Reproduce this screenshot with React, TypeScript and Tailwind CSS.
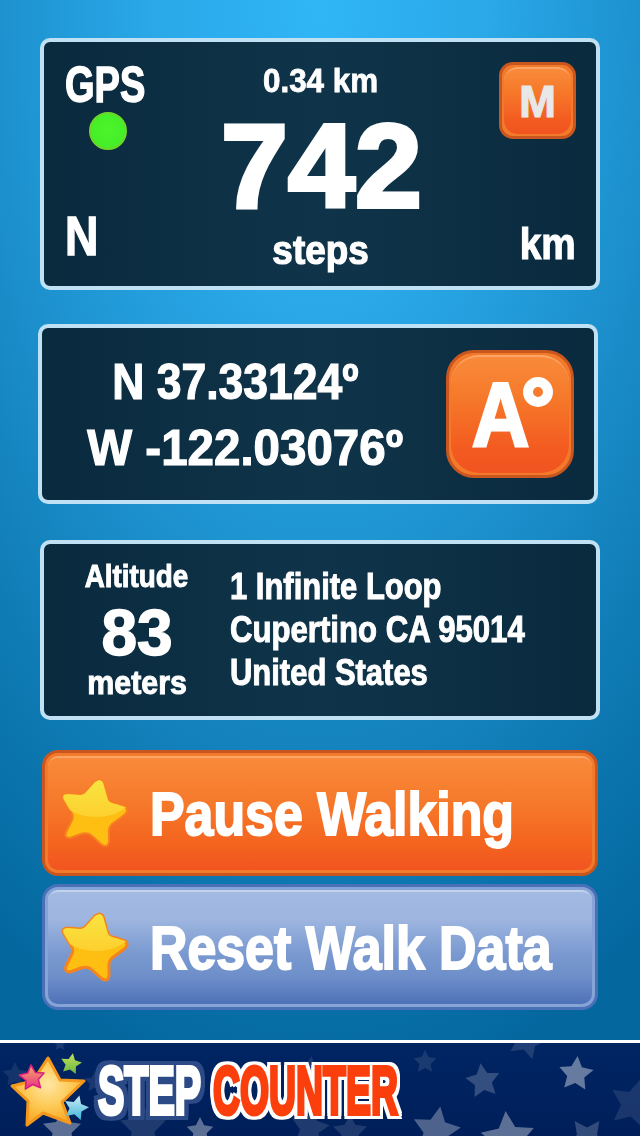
import React from "react";

const FONT = "font-['Liberation_Sans',sans-serif] font-bold text-white leading-none whitespace-nowrap";

function starPoints(cx: number, cy: number, r: number, rot = 0, inner = 0.5) {
  const pts: string[] = [];
  for (let i = 0; i < 10; i++) {
    const a = ((-90 + rot + i * 36) * Math.PI) / 180;
    const rr = i % 2 === 0 ? r : r * inner;
    pts.push(`${(cx + rr * Math.cos(a)).toFixed(1)},${(cy + rr * Math.sin(a)).toFixed(1)}`);
  }
  return pts.join(" ");
}

function ButtonStar({ id, stroke, sw }: { id: string; stroke: string; sw: number }) {
  const d = "M39 4 Q43 4 44 10 L48 24 Q50 27 56 28 L65 31 Q70 35 63 40 L52 48 Q48 52 49 58 L49 66 Q47 73 41 68 L31 59 Q27 56 21 58 L10 62 Q3 62 7 54 L12 44 Q14 39 10 34 L4 24 Q1 18 8 18 L20 19 Q24 19 27 15 L35 6 Z";
  return (
    <svg width="72" height="76" viewBox="0 0 72 76" className="shrink-0">
      <defs>
        <clipPath id={id}><path d={d} /></clipPath>
        <linearGradient id={id + "g"} x1="0" y1="0" x2="0" y2="1">
          <stop offset="0" stopColor="#f5f24e" />
          <stop offset="1" stopColor="#fdd02e" />
        </linearGradient>
      </defs>
      <path d={d} fill="#ffbe12" stroke={stroke} strokeWidth={sw} strokeLinejoin="round" />
      <g clipPath={`url(#${id})`}>
        <ellipse cx="36" cy="10" rx="42" ry="31" fill={`url(#${id}g)`} />
      </g>
    </svg>
  );
}

function OrangeSquare({ children, className }: { children: React.ReactNode; className: string }) {
  return (
    <div className={`border-[3px] border-[#c9561f] bg-[#f37a2a] p-[2px] shrink-0 ${className}`}>
      <div className="w-full h-full rounded-[inherit] bg-[linear-gradient(#f98a3b_0%,#f6792a_35%,#f35a20_80%,#f15420_100%)] border-t-2 border-t-[#fba566] flex items-center justify-center">
        {children}
      </div>
    </div>
  );
}

function Panel({ className, children }: { className: string; children: React.ReactNode }) {
  return (
    <div className={`border-[4px] border-[#bfe1f3] rounded-[10px] bg-[linear-gradient(90deg,#0a2a3e_0%,#0f3449_50%,#0a2a3e_100%)] ${className}`}>
      {children}
    </div>
  );
}

function BigButton({ label, blue, id }: { label: string; blue?: boolean; id: string }) {
  return (
    <div
      className={`h-[126px] rounded-[16px] border-[3px] p-[3px] ${
        blue ? "border-[#4a71b8] bg-[#87a4d6]" : "border-[#c9561f] bg-[#f37a2a]"
      }`}
    >
      <div
        className={`h-full rounded-[10px] border-t-2 flex items-center gap-[18px] pl-[12px] ${
          blue
            ? "border-t-[#c3d3ec] bg-[linear-gradient(#a3bbe2_0%,#9db5df_25%,#7a99d0_55%,#6f8fca_75%,#4f72b8_100%)]"
            : "border-t-[#fba566] bg-[linear-gradient(#f98a3b_0%,#f6792a_40%,#f4651f_75%,#f15420_100%)]"
        }`}
      >
        <ButtonStar id={id} stroke={blue ? "#f5841f" : "#f8811f"} sw={blue ? 3 : 2} />
        <span className={`${FONT} text-[61px] origin-left scale-x-[0.85] [-webkit-text-stroke:2px_white]`}>{label}</span>
      </div>
    </div>
  );
}

const footerStars: [number, number, number, number, number][] = [
  [425, 1062, 12, 0.1, 0], [483, 1081, 18, 0.2, -8], [576, 1074, 18, 0.4, 5], [527, 1040, 20, 0.12, 20],
  [436, 1131, 25, 0.3, 10], [508, 1139, 28, 0.36, -5], [587, 1138, 21, 0.2, 36], [634, 1104, 26, 0.1, 15],
  [62, 1130, 20, 0.36, 0], [200, 1131, 14, 0.36, 0], [143, 1128, 24, 0.12, 0], [310, 1128, 20, 0.12, 10],
  [350, 1132, 18, 0.12, 0], [15, 1075, 13, 0.08, 0], [95, 1082, 11, 0.1, 0], [310, 1066, 10, 0.1, 10], [60, 1044, 7, 0.1, 0],
];

function FooterBackdrop() {
  return (
    <svg className="absolute inset-0 w-full h-full" viewBox="0 1043 640 93">
      {footerStars.map(([x, y, r, o, rot], i) => (
        <polygon key={i} points={starPoints(x, y, r, rot)} fill="#ffffff" opacity={o} />
      ))}
    </svg>
  );
}

function LogoStars() {
  return (
    <svg width="90" height="84" viewBox="0 0 90 84" className="shrink-0">
      <defs>
        <radialGradient id="big" cx="0.5" cy="0.4" r="0.6">
          <stop offset="0" stopColor="#ffe7a4" />
          <stop offset="0.55" stopColor="#fdc955" />
          <stop offset="1" stopColor="#f8a821" />
        </radialGradient>
        <linearGradient id="pink" x1="0" y1="0" x2="0" y2="1">
          <stop offset="0" stopColor="#f4b15f" />
          <stop offset="1" stopColor="#e82a8c" />
        </linearGradient>
        <linearGradient id="green" x1="0" y1="0" x2="0" y2="1">
          <stop offset="0" stopColor="#bfe05a" />
          <stop offset="1" stopColor="#6db544" />
        </linearGradient>
        <linearGradient id="cyan" x1="0" y1="0" x2="0" y2="1">
          <stop offset="0" stopColor="#cdeef5" />
          <stop offset="1" stopColor="#3fb4d8" />
        </linearGradient>
      </defs>
      <polygon points="40,10 52,32 76,33 54,54 62,75 35,65 19,77 20,53 4,38 25,33" fill="url(#big)" stroke="#f5981e" strokeWidth="3" strokeLinejoin="round" />
      <polygon points={starPoints(24, 30, 13, -5)} fill="url(#pink)" stroke="#d81f7f" strokeWidth="1.5" strokeLinejoin="round" />
      <polygon points={starPoints(63, 16, 11, 10)} fill="url(#green)" />
      <polygon points={starPoints(68, 60, 13, 15)} fill="url(#cyan)" />
    </svg>
  );
}

export default function App() {
  return (
    <div className="w-[640px] h-[1136px] overflow-hidden flex flex-col bg-[radial-gradient(ellipse_600px_1100px_at_50%_0%,#30b6f6_0%,#2aa8e8_28%,#1c90cd_55%,#0d78b1_80%,#04689f_100%)]">
      <div className="flex-1 flex flex-col pt-[38px]">
        <Panel className="ml-[40px] w-[560px] h-[252px] flex justify-between">
          <div className="w-[94px] pl-[21px] pt-[18px] flex flex-col">
            <span className={`${FONT} text-[50px] origin-left scale-x-[0.76] [-webkit-text-stroke:1.5px_white]`}>GPS</span>
            <div className="ml-[24px] mt-[2px] w-[38px] h-[38px] rounded-full border-2 border-[#6fd52a] bg-[radial-gradient(circle_at_50%_45%,#4cf52a_0%,#44ee28_70%,#3fdc26_100%)]" />
            <span className={`${FONT} text-[55px] mt-auto mb-[22px] origin-left scale-x-[0.84] [-webkit-text-stroke:1.5px_white]`}>N</span>
          </div>
          <div className="flex-1 flex flex-col items-center pt-[22px] pl-[2px]">
            <span className={`${FONT} text-[33px] scale-x-[0.95] [-webkit-text-stroke:0.8px_white]`}>0.34 km</span>
            <span className={`${FONT} text-[118px] mt-[10px] scale-x-[1.02] [-webkit-text-stroke:4px_white]`}>742</span>
            <span className={`${FONT} text-[41px] mt-[5px] scale-x-[0.9] [-webkit-text-stroke:1.2px_white]`}>steps</span>
          </div>
          <div className="w-[94px] pr-[20px] pt-[20px] flex flex-col items-end">
            <OrangeSquare className="w-[77px] h-[77px] rounded-[14px]">
              <span className="font-['Liberation_Sans',sans-serif] font-bold leading-none text-[#e8e8e8] text-[44px] [-webkit-text-stroke:1.2px_#e8e8e8]">M</span>
            </OrangeSquare>
            <span className={`${FONT} text-[44px] mt-auto mb-[20px] origin-right scale-x-[0.88] [-webkit-text-stroke:1.2px_white]`}>km</span>
          </div>
        </Panel>

        <Panel className="ml-[38px] mt-[34px] w-[560px] h-[180px] flex items-center">
          <div className="w-[402px] flex flex-col items-center gap-[16px] pl-[4px] pt-[1px]">
            <span className={`${FONT} text-[50px] -ml-[20px] scale-x-[0.89] [-webkit-text-stroke:1.2px_white]`}>N 37.33124º</span>
            <span className={`${FONT} text-[50px] scale-x-[0.95] [-webkit-text-stroke:1.2px_white]`}>W -122.03076º</span>
          </div>
          <OrangeSquare className="w-[128px] h-[128px] rounded-[28px] ml-[2px]">
            <span className={`${FONT} text-[90px] scale-x-[0.88] [-webkit-text-stroke:3px_white] -ml-[20px]`}>A</span>
            <span className="absolute ml-[56px] -mt-[46px] w-[30px] h-[30px] rounded-full border-[10px] border-white" />
          </OrangeSquare>
        </Panel>

        <Panel className="ml-[40px] mt-[36px] w-[560px] h-[180px] flex items-center">
          <div className="w-[186px] flex flex-col items-center -mt-[2px]">
            <span className={`${FONT} text-[32px] scale-x-[0.87] [-webkit-text-stroke:1px_white]`}>Altitude</span>
            <span className={`${FONT} text-[64px] mt-[9px] [-webkit-text-stroke:1.5px_white]`}>83</span>
            <span className={`${FONT} text-[33px] mt-[1px] scale-x-[0.92] [-webkit-text-stroke:1px_white]`}>meters</span>
          </div>
          <div className="flex flex-col gap-[7px]">
            <span className={`${FONT} text-[36px] origin-left scale-x-[0.86] [-webkit-text-stroke:1px_white]`}>1 Infinite Loop</span>
            <span className={`${FONT} text-[36px] origin-left scale-x-[0.865] [-webkit-text-stroke:1px_white]`}>Cupertino CA 95014</span>
            <span className={`${FONT} text-[36px] origin-left scale-x-[0.86] [-webkit-text-stroke:1px_white]`}>United States</span>
          </div>
        </Panel>

        <div className="mt-[30px] ml-[42px] w-[556px] flex flex-col gap-[8px]">
          <BigButton id="s1" label="Pause Walking" />
          <BigButton id="s2" blue label="Reset Walk Data" />
        </div>
      </div>

      <div className="h-[96px] border-t-[3px] border-white bg-[linear-gradient(#002563,#001f5a)] relative overflow-hidden flex items-center pl-[8px]">
        <FooterBackdrop />
        <div className="relative flex items-center">
          <LogoStars />
          <div className="w-[115px] [filter:drop-shadow(4px_0_0_#2c4a86)_drop-shadow(-4px_0_0_#2c4a86)_drop-shadow(0_4px_0_#2c4a86)_drop-shadow(0_-4px_0_#2c4a86)]">
            <div className="font-['Liberation_Sans',sans-serif] font-bold leading-none text-white text-[68px] [-webkit-text-stroke:4px_#ffffff] origin-left scale-x-[0.58] whitespace-nowrap">STEP</div>
          </div>
          <div className="[filter:drop-shadow(3px_0_0_#fff)_drop-shadow(-3px_0_0_#fff)_drop-shadow(0_3px_0_#fff)_drop-shadow(0_-3px_0_#fff)]">
            <div className="font-['Liberation_Sans',sans-serif] font-bold leading-none text-[#fb3f0c] text-[68px] [-webkit-text-stroke:4px_#fb3f0c] origin-left scale-x-[0.55] whitespace-nowrap">COUNTER</div>
          </div>
        </div>
      </div>
    </div>
  );
}
